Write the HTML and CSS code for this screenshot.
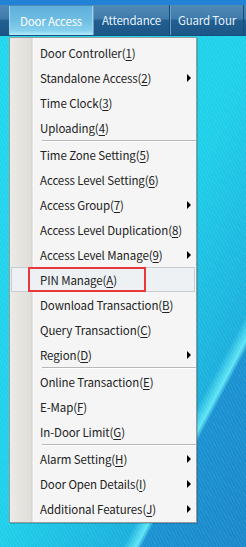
FILE: index.html
```html
<!DOCTYPE html>
<html lang="en">
<head>
  <meta charset="UTF-8" />
  <meta name="viewport" content="width=device-width, initial-scale=1.0"/>
  <title>Door Access</title>
  <link rel="stylesheet" href="styles.css">
</head>
<body>
  <div class="top-strip"></div>

  <nav class="menubar">
    <div class="tab active">Door Access</div>
    <div class="tab tab-att">Attendance</div>
    <div class="tab tab-guard">Guard Tour</div>
  </nav>

  <div class="dropdown">
    <div class="item">Door Controller(<u>1</u>)</div>
    <div class="item">Standalone Access(<u>2</u>)<span class="arrow"></span></div>
    <div class="item">Time Clock(<u>3</u>)</div>
    <div class="item">Uploading(<u>4</u>)</div>
    <div class="sep"></div>
    <div class="item">Time Zone Setting(<u>5</u>)</div>
    <div class="item">Access Level Setting(<u>6</u>)</div>
    <div class="item">Access Group(<u>7</u>)<span class="arrow"></span></div>
    <div class="item">Access Level Duplication(<u>8</u>)</div>
    <div class="item">Access Level Manage(<u>9</u>)<span class="arrow"></span></div>
    <div class="item hover">PIN Manage(<u>A</u>)<span class="mark"></span></div>
    <div class="item">Download Transaction(<u>B</u>)</div>
    <div class="item">Query Transaction(<u>C</u>)</div>
    <div class="item">Region(<u>D</u>)<span class="arrow"></span></div>
    <div class="sep"></div>
    <div class="item">Online Transaction(<u>E</u>)</div>
    <div class="item">E-Map(<u>F</u>)</div>
    <div class="item">In-Door Limit(<u>G</u>)</div>
    <div class="sep"></div>
    <div class="item">Alarm Setting(<u>H</u>)<span class="arrow"></span></div>
    <div class="item">Door Open Details(<u>I</u>)<span class="arrow"></span></div>
    <div class="item">Additional Features(<u>J</u>)<span class="arrow"></span></div>
  </div>
</body>
</html>
```

FILE: styles.css
```css
* {
  box-sizing: border-box;
  margin: 0;
  padding: 0;
}

html, body {
  height: 100%;
}

body {
  font-family: "Noto Sans CJK SC", "Noto Sans", sans-serif;
  font-size: 11.5px;
  letter-spacing: -0.1px;
  color: #222;
  min-height: 547px;
  background:
    repeating-linear-gradient(62deg, rgba(255,255,255,0.07) 0 1px, rgba(0,0,0,0) 1px 3px),
    linear-gradient(118deg, #20d8ee 0%, #1fd0ea 52%, #1bb0dd 77%, #5fe6f6 79.5%, #1a92d2 80.5%, #1a87ca 100%);
}

.top-strip {
  height: 5px;
  background: #2283d6;
}

.menubar {
  display: flex;
  height: 31px;
  padding-left: 9px;
  white-space: nowrap;
  background: linear-gradient(#5089b6 0%, #3f7cab 45%, #225f91 52%, #1b5686 100%);
  border-bottom: 1px solid #17507e;
}

.tab {
  display: flex;
  align-items: center;
  justify-content: center;
  color: #e6f2fc;
  font-size: 11.5px;
  letter-spacing: -0.2px;
  border-left: 1px solid #6f9dc2;
  border-right: 1px solid #164b77;
}

.tab.active {
  width: 84px;
  margin-top: 1px;
  background: linear-gradient(#5fb0dc 0%, #6fbde3 50%, #86d0ee 85%, #b4ecfb 100%);
  border-left: 1px solid #9dd3ee;
  border-right: 1px solid #9dd3ee;
  color: #fff;
}

.tab-att {
  width: 77px;
}

.tab-guard {
  width: 74px;
}

.dropdown {
  width: 188px;
  margin: 1px 0 0 9px;
  padding: 2px 0 1px;
  border: 1px solid #9a9a9a;
  background:
    linear-gradient(to right, #ebeae6 0, #dfded9 21px, #cfcecb 22px, #fbfbfb 23px, #f5f5f5 24px);
  box-shadow: 1px 1px 0 rgba(0,0,0,0.15);
}

.item {
  position: relative;
  display: flex;
  align-items: center;
  height: 25px;
  padding: 0 5px 0 30px;
  white-space: nowrap;
}

.item u {
  text-underline-offset: 2px;
}

.arrow {
  margin-left: auto;
  width: 0;
  height: 0;
  border-left: 4px solid #000;
  border-top: 4px solid transparent;
  border-bottom: 4px solid transparent;
}

.item.hover {
  margin: 0 1px;
  padding-left: 28px;
  background: #eef1f3;
  border: 1px solid #c7cdd2;
}

.mark {
  position: absolute;
  left: 16px;
  top: -1px;
  width: 118px;
  height: 25px;
  border: 2px solid #e8383c;
}

.sep {
  height: 2px;
  margin-left: 32px;
  border-top: 1px solid #b8b8b8;
  border-bottom: 1px solid #fdfdfd;
}
```
